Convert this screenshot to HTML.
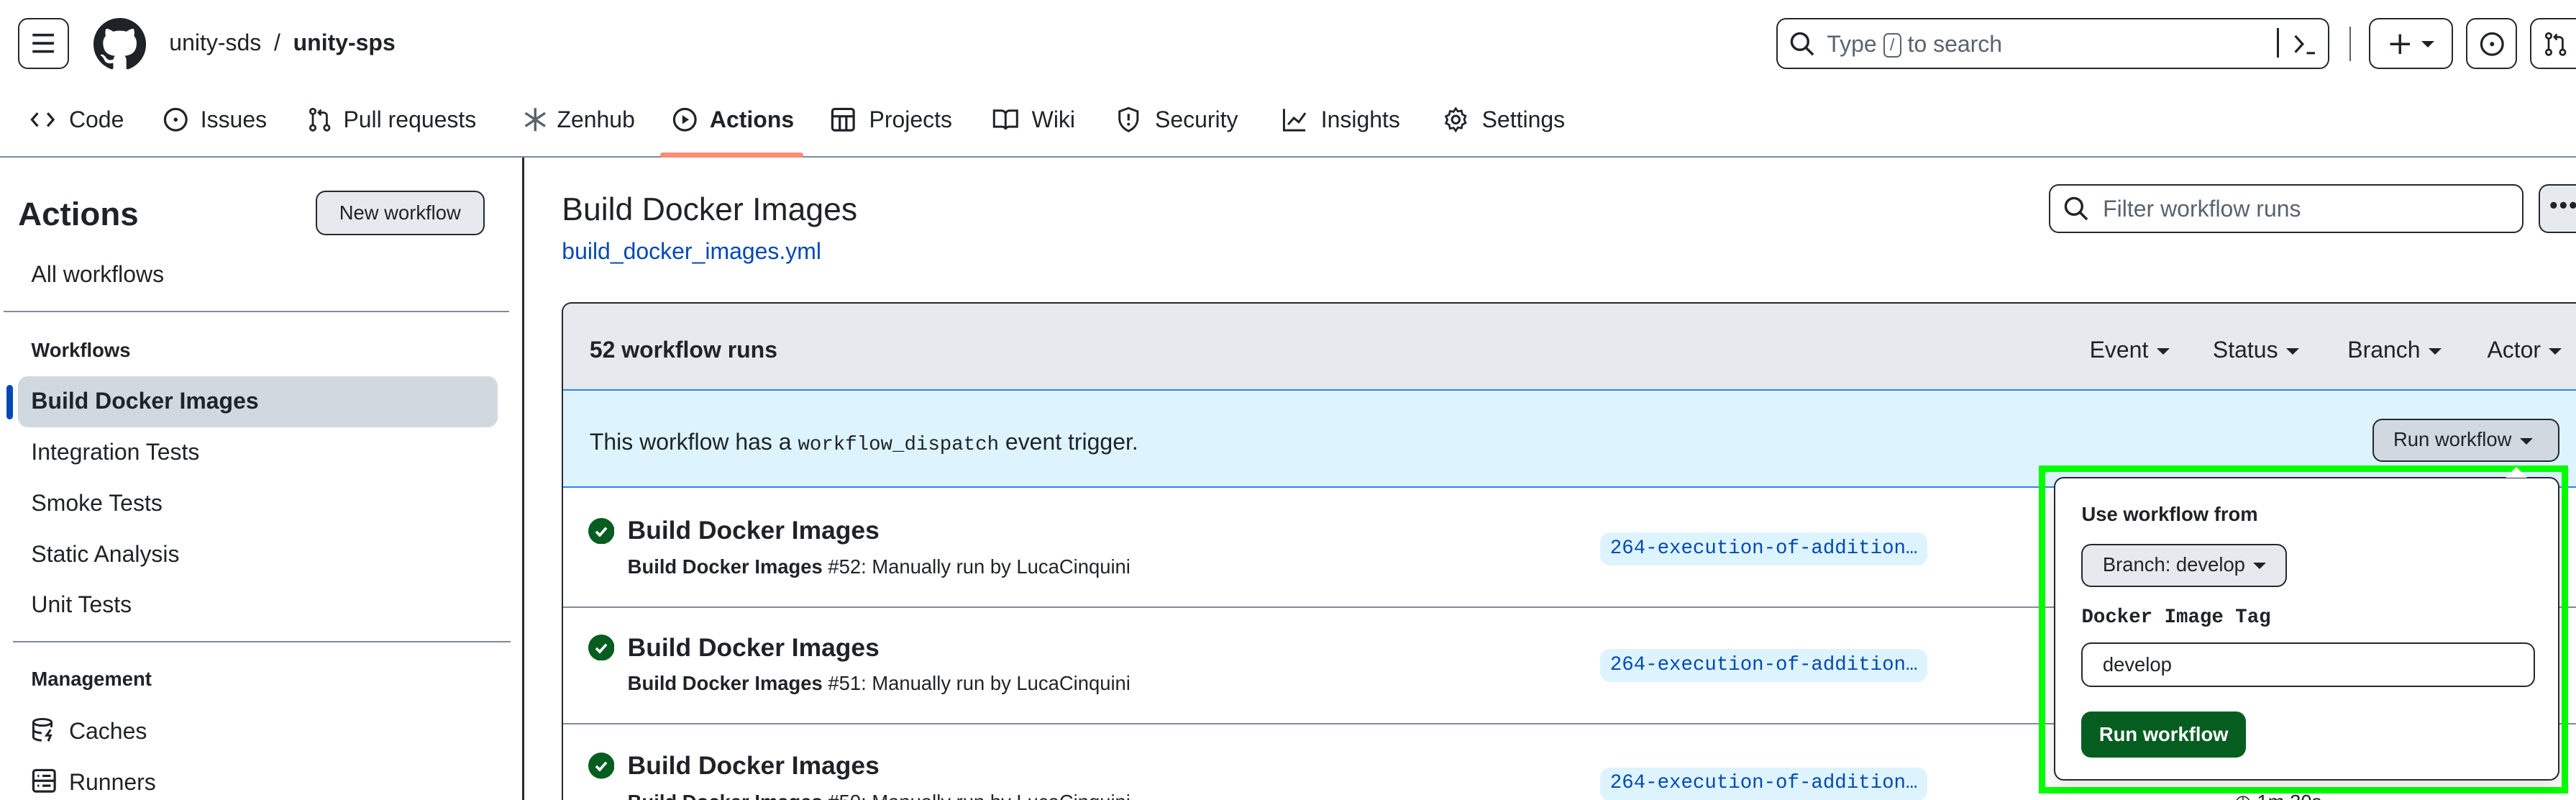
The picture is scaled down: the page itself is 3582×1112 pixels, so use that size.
<!DOCTYPE html>
<html><head><meta charset="utf-8"><style>
*{box-sizing:border-box;margin:0;padding:0}
html,body{width:3582px;height:1112px;overflow:hidden;background:#fff}
#w{zoom:2.2845;width:1568px;height:487px;position:relative;font-family:"Liberation Sans",sans-serif;color:#1f2328;font-size:14px;overflow:hidden}
.a{position:absolute;white-space:nowrap}
.btn{position:absolute;border:1px solid #25292e;border-radius:6px;background:#fff}
svg{display:block}
.ic{position:absolute}
.tri{display:inline-block;width:0;height:0;border-left:4px solid transparent;border-right:4px solid transparent;border-top:4px solid #1f2328;vertical-align:middle;margin-left:5px}
.hr{position:absolute;height:1px;background:#818b98}
.side{font-size:14px}
.pill{position:absolute;background:#ddf4ff;color:#0349b4;font-family:"Liberation Mono",monospace;font-size:12px;border-radius:6px;padding:2px 6px;height:20px;line-height:16px}
.rt{font-size:15.5px;font-weight:bold}
.rs{font-size:12px}
</style></head><body><div id="w">
<!-- header -->
<div class="btn" style="left:11px;top:11px;width:31px;height:31px"><svg width="29" height="29" viewBox="0 0 29 29"><path d="M8 9.5h13M8 14.5h13M8 19.5h13" stroke="#1f2328" stroke-width="1.6"/></svg></div>
<svg class="ic" style="left:57px;top:11px" width="32" height="32" viewBox="0 0 16 16"><path fill="#1f2328" d="M8 0C3.580 0 0 3.58 0 8c0 3.54 2.290 6.53 5.47 7.59.4.07.55-.17.55-.38 0-.19-.01-.82-.01-1.49-2.010.37-2.530-.49-2.690-.94-.09-.23-.48-.94-.82-1.130-.28-.15-.68-.52-.01-.53.63-.01 1.080.58 1.230.82.72 1.21 1.870.87 2.330.66.07-.52.28-.87.51-1.07-1.780-.2-3.640-.89-3.640-3.95 0-.87.31-1.59.82-2.15-.08-.2-.36-1.02.08-2.12 0 0 .67-.21 2.2.82.64-.18 1.320-.27 2-.27.68 0 1.360.09 2 .27 1.530-1.04 2.2-.82 2.2-.82.44 1.1.16 1.920.08 2.12.51.56.82 1.270.82 2.15 0 3.07-1.870 3.75-3.650 3.95.29.25.54.73.54 1.48 0 1.07-.01 1.93-.01 2.2 0 .21.15.46.55.38A8.013 8.013 0 0016 8c0-4.420-3.580-8-8-8z"/></svg>
<div class="a" style="left:103px;top:18px;font-size:14px">unity-sds &nbsp;/&nbsp; <b>unity-sps</b></div>
<div class="btn" style="left:1081px;top:11px;width:337px;height:31px"></div>
<svg class="ic" style="left:1089px;top:19px" width="16" height="16" viewBox="0 0 16 16"><circle cx="6.5" cy="6.5" r="5" fill="none" stroke="#1f2328" stroke-width="1.5"/><path d="M10 10l4.5 4.5" stroke="#1f2328" stroke-width="1.5"/></svg>
<div class="a" style="left:1112px;top:19px;color:#59636e;font-size:14px">Type <span style="display:inline-block;border:1px solid #59636e;border-radius:3px;font-size:10px;width:11px;height:15px;line-height:13px;text-align:center;vertical-align:1px">/</span> to search</div>
<div class="a" style="left:1386px;top:17px;width:1px;height:18px;background:#1f2328"></div>
<svg class="ic" style="left:1395px;top:19px" width="16" height="16" viewBox="0 0 16 16"><path d="M2 3l4.5 5L2 13M9 13.5h5" fill="none" stroke="#1f2328" stroke-width="1.4"/></svg>
<div class="a" style="left:1430px;top:16px;width:1px;height:21px;background:#59636e"></div>
<div class="btn" style="left:1442px;top:11px;width:51px;height:31px"><svg style="position:absolute;left:10px;top:7px" width="16" height="16" viewBox="0 0 16 16"><path d="M8 2v12M2 8h12" stroke="#1f2328" stroke-width="1.5"/></svg><span class="tri" style="position:absolute;left:31px;top:13px;margin:0"></span></div>
<div class="btn" style="left:1501px;top:11px;width:31px;height:31px"><svg style="position:absolute;left:7px;top:7px" width="16" height="16" viewBox="0 0 16 16"><circle cx="8" cy="8" r="6.5" fill="none" stroke="#1f2328" stroke-width="1.4"/><circle cx="8" cy="8" r="1.3" fill="#1f2328"/></svg></div>
<div class="btn" style="left:1540px;top:11px;width:40px;height:31px"><svg style="position:absolute;left:7px;top:7px" width="16" height="16" viewBox="0 0 16 16"><circle cx="3.5" cy="3" r="1.6" fill="none" stroke="#1f2328" stroke-width="1.2"/><circle cx="3.5" cy="13" r="1.6" fill="none" stroke="#1f2328" stroke-width="1.2"/><circle cx="12" cy="13" r="1.6" fill="none" stroke="#1f2328" stroke-width="1.2"/><path d="M3.5 4.6v6.8M12 11.4V5.5c0-1-1-1.8-2-1.8H7M8.5 2L7 3.7l1.5 1.7" fill="none" stroke="#1f2328" stroke-width="1.2"/></svg></div>
<!-- nav -->
<div class="a" style="left:0;top:95px;width:1568px;height:1px;background:#818b98"></div>
<div class="a" style="left:402px;top:93px;width:87px;height:3px;background:#fd8c73;border-radius:2px"></div>
<svg class="ic" style="left:18px;top:65px" width="16" height="16" viewBox="0 0 16 16"><path d="M5 4L1.5 8 5 12M11 4l3.5 4-3.5 4" fill="none" stroke="#1f2328" stroke-width="1.4"/></svg>
<div class="a" style="left:42px;top:65px">Code</div>
<svg class="ic" style="left:99px;top:65px" width="16" height="16" viewBox="0 0 16 16"><circle cx="8" cy="8" r="6.5" fill="none" stroke="#1f2328" stroke-width="1.4"/><circle cx="8" cy="8" r="1.2" fill="#1f2328"/></svg>
<div class="a" style="left:122px;top:65px">Issues</div>
<svg class="ic" style="left:187px;top:65px" width="16" height="16" viewBox="0 0 16 16"><circle cx="3.5" cy="3" r="1.6" fill="none" stroke="#1f2328" stroke-width="1.2"/><circle cx="3.5" cy="13" r="1.6" fill="none" stroke="#1f2328" stroke-width="1.2"/><circle cx="12" cy="13" r="1.6" fill="none" stroke="#1f2328" stroke-width="1.2"/><path d="M3.5 4.6v6.8M12 11.4V5.5c0-1-1-1.8-2-1.8H7M8.5 2L7 3.7l1.5 1.7" fill="none" stroke="#1f2328" stroke-width="1.2"/></svg>
<div class="a" style="left:209px;top:65px">Pull requests</div>
<svg class="ic" style="left:318px;top:65px" width="16" height="16" viewBox="0 0 16 16"><path d="M8 1v14M2 4l12 8M2 12l12-8" stroke="#59636e" stroke-width="1.5"/></svg>
<div class="a" style="left:339px;top:65px">Zenhub</div>
<svg class="ic" style="left:409px;top:65px" width="16" height="16" viewBox="0 0 16 16"><circle cx="8" cy="8" r="6.5" fill="none" stroke="#1f2328" stroke-width="1.4"/><path d="M6.5 5.3v5.4L10.5 8z" fill="#1f2328"/></svg>
<div class="a" style="left:432px;top:65px;font-weight:bold">Actions</div>
<svg class="ic" style="left:505px;top:65px" width="16" height="16" viewBox="0 0 16 16"><rect x="1.5" y="1.5" width="13" height="13" rx="1.5" fill="none" stroke="#1f2328" stroke-width="1.4"/><path d="M1.5 6h13M6 6v8.5M10 6v8.5" stroke="#1f2328" stroke-width="1.4"/></svg>
<div class="a" style="left:529px;top:65px">Projects</div>
<svg class="ic" style="left:604px;top:65px" width="16" height="16" viewBox="0 0 16 16"><path d="M1 2.5h4.5c1.4 0 2.5 1 2.5 2.3V14c0-1-1-1.7-2.2-1.7H1zM15 2.5h-4.5C9.1 2.5 8 3.5 8 4.8V14c0-1 1-1.7 2.2-1.7H15z" fill="none" stroke="#1f2328" stroke-width="1.3"/></svg>
<div class="a" style="left:628px;top:65px">Wiki</div>
<svg class="ic" style="left:679px;top:65px" width="16" height="16" viewBox="0 0 16 16"><path d="M8 1L2.5 3v4.5c0 3.5 2.5 6 5.5 7.5 3-1.5 5.5-4 5.5-7.5V3z" fill="none" stroke="#1f2328" stroke-width="1.3"/><path d="M8 4.5v4" stroke="#1f2328" stroke-width="1.4"/><circle cx="8" cy="10.8" r=".9" fill="#1f2328"/></svg>
<div class="a" style="left:703px;top:65px">Security</div>
<svg class="ic" style="left:780px;top:65px" width="16" height="16" viewBox="0 0 16 16"><path d="M1.5 1.5v13h13M4 11l3.5-4 3 2.5L14.5 4" fill="none" stroke="#1f2328" stroke-width="1.3"/></svg>
<div class="a" style="left:804px;top:65px">Insights</div>
<svg class="ic" style="left:878px;top:65px" width="16" height="16" viewBox="0 0 16 16"><circle cx="8" cy="8" r="2.3" fill="none" stroke="#1f2328" stroke-width="1.3"/><path d="M8 1.2l1.3 1.8 2.2-.4.5 2.2 2 1-.9 2.1.9 2.1-2 1-.5 2.2-2.2-.4L8 14.8l-1.3-1.8-2.2.4-.5-2.2-2-1 .9-2.1-.9-2.1 2-1 .5-2.2 2.2.4z" fill="none" stroke="#1f2328" stroke-width="1.2"/></svg>
<div class="a" style="left:902px;top:65px">Settings</div>
<!-- sidebar -->
<div class="a" style="left:318px;top:96px;width:1px;height:400px;background:#25292e"></div>
<div class="a" style="left:11px;top:119px;font-size:20px;font-weight:bold">Actions</div>
<div class="btn" style="left:192px;top:116px;width:103px;height:27px;background:#e6eaef;font-size:12px;line-height:25px;text-align:center">New workflow</div>
<div class="a side" style="left:19px;top:159px">All workflows</div>
<div class="hr" style="left:2px;top:189px;width:308px"></div>
<div class="a" style="left:19px;top:206px;font-size:12px;font-weight:bold">Workflows</div>
<div class="a" style="left:11px;top:229px;width:292px;height:31px;background:#d1d9e0;border-radius:6px"></div>
<div class="a" style="left:4px;top:234px;width:4px;height:21px;background:#0349b4;border-radius:2px"></div>
<div class="a side" style="left:19px;top:236px;font-weight:bold">Build Docker Images</div>
<div class="a side" style="left:19px;top:267px">Integration Tests</div>
<div class="a side" style="left:19px;top:298px">Smoke Tests</div>
<div class="a side" style="left:19px;top:329px">Static Analysis</div>
<div class="a side" style="left:19px;top:360px">Unit Tests</div>
<div class="hr" style="left:8px;top:390px;width:303px"></div>
<div class="a" style="left:19px;top:406px;font-size:12px;font-weight:bold">Management</div>
<svg class="ic" style="left:19px;top:436px" width="16" height="16" viewBox="0 0 16 16"><ellipse cx="7" cy="3.5" rx="5.5" ry="2" fill="none" stroke="#1f2328" stroke-width="1.3"/><path d="M1.5 3.5v9c0 1.1 2.5 2 5 2M12.5 3.5v3M1.5 8c0 1.1 2.5 2 5 2" fill="none" stroke="#1f2328" stroke-width="1.3"/><path d="M12 8l-2.5 3.5h2.5L10.5 15" fill="none" stroke="#1f2328" stroke-width="1.3"/></svg>
<div class="a side" style="left:42px;top:437px">Caches</div>
<svg class="ic" style="left:19px;top:467px" width="16" height="16" viewBox="0 0 16 16"><rect x="1.5" y="1.5" width="13" height="13" rx="1.5" fill="none" stroke="#1f2328" stroke-width="1.4"/><path d="M1.5 8h13M4 5h1M7 5h5M4 11h1M7 11h5" stroke="#1f2328" stroke-width="1.4"/></svg>
<div class="a side" style="left:42px;top:468px">Runners</div>
<!-- main -->
<div class="a" style="left:342px;top:117px;font-size:19.5px">Build Docker Images</div>
<div class="a" style="left:342px;top:145px;color:#0349b4;font-size:14px">build_docker_images.yml</div>
<div class="btn" style="left:1247px;top:112px;width:289px;height:30px"></div>
<svg class="ic" style="left:1256px;top:119px" width="16" height="16" viewBox="0 0 16 16"><circle cx="6.5" cy="6.5" r="5" fill="none" stroke="#1f2328" stroke-width="1.5"/><path d="M10 10l4.5 4.5" stroke="#1f2328" stroke-width="1.5"/></svg>
<div class="a" style="left:1280px;top:119px;color:#59636e">Filter workflow runs</div>
<div class="btn" style="left:1545px;top:112px;width:40px;height:30px;background:#e6eaef"><span style="position:absolute;left:6px;top:4px;font-size:14px;font-weight:bold;letter-spacing:1px">•••</span></div>
<div class="a" style="left:342px;top:184px;width:1240px;height:320px;border:1px solid #25292e;border-radius:6px;overflow:hidden">
 <div style="position:absolute;left:0;top:0;width:100%;height:53px;background:#e6eaef"></div>
 <div class="a" style="left:16px;top:20px;font-weight:bold">52 workflow runs</div>
 <div class="a" style="left:929px;top:20px">Event<span class="tri"></span></div>
 <div class="a" style="left:1004px;top:20px">Status<span class="tri"></span></div>
 <div class="a" style="left:1086px;top:20px">Branch<span class="tri"></span></div>
 <div class="a" style="left:1171px;top:20px">Actor<span class="tri"></span></div>
 <div style="position:absolute;left:0;top:52px;width:100%;height:60px;background:#ddf4ff;border-top:1px solid #2f81f7;border-bottom:1px solid #2f81f7"></div>
 <div class="a" style="left:16px;top:76px">This workflow has a <span style="font-family:'Liberation Mono',monospace;font-size:12px">workflow_dispatch</span> event trigger.</div>
 <div class="btn" style="left:1101px;top:70px;width:114px;height:26px;background:#d1d9e0;font-size:12px;line-height:24px;padding-left:12px">Run workflow<span class="tri"></span></div>
 <div class="hr" style="left:0;top:184px;width:100%"></div>
 <div class="hr" style="left:0;top:255px;width:100%"></div>
</div>
<!-- rows -->
<svg class="ic" style="left:358px;top:315px" width="16" height="16" viewBox="0 0 16 16"><circle cx="8" cy="8" r="8" fill="#055d20"/><path d="M4.8 8.3l2.2 2.2 4-4.5" fill="none" stroke="#fff" stroke-width="1.6"/></svg>
<div class="a rt" style="left:382px;top:314px">Build Docker Images</div>
<div class="a rs" style="left:382px;top:338px"><b>Build Docker Images</b> #52: Manually run by LucaCinquini</div>
<div class="pill" style="left:974px;top:324px">264-execution-of-addition…</div>
<svg class="ic" style="left:358px;top:386px" width="16" height="16" viewBox="0 0 16 16"><circle cx="8" cy="8" r="8" fill="#055d20"/><path d="M4.8 8.3l2.2 2.2 4-4.5" fill="none" stroke="#fff" stroke-width="1.6"/></svg>
<div class="a rt" style="left:382px;top:385px">Build Docker Images</div>
<div class="a rs" style="left:382px;top:409px"><b>Build Docker Images</b> #51: Manually run by LucaCinquini</div>
<div class="pill" style="left:974px;top:395px">264-execution-of-addition…</div>
<svg class="ic" style="left:358px;top:458px" width="16" height="16" viewBox="0 0 16 16"><circle cx="8" cy="8" r="8" fill="#055d20"/><path d="M4.8 8.3l2.2 2.2 4-4.5" fill="none" stroke="#fff" stroke-width="1.6"/></svg>
<div class="a rt" style="left:382px;top:457px">Build Docker Images</div>
<div class="a rs" style="left:382px;top:481px"><b>Build Docker Images</b> #50: Manually run by LucaCinquini</div>
<div class="pill" style="left:974px;top:467px">264-execution-of-addition…</div>
<div class="a rs" style="left:1360px;top:481px">◷ 1m 30s</div>
<!-- popup -->
<div class="a" style="left:1241px;top:283px;width:322px;height:200px;border:4px solid #00ff00"></div>
<div class="a" style="left:1250px;top:290px;width:308px;height:185px;background:#fff;border:1px solid #25292e;border-radius:6px;box-shadow:0 4px 10px rgba(0,0,0,.1)"></div>
<div class="a" style="left:1525px;top:284px;width:0;height:0;border-left:7px solid transparent;border-right:7px solid transparent;border-bottom:7px solid #fff"></div>
<div class="a" style="left:1267px;top:306px;font-size:12px;font-weight:bold">Use workflow from</div>
<div class="btn" style="left:1267px;top:331px;width:125px;height:26px;background:#e6eaef;font-size:12px;line-height:24px;padding-left:12px">Branch: develop<span class="tri"></span></div>
<div class="a" style="left:1267px;top:369px;font-family:'Liberation Mono',monospace;font-size:12px;font-weight:bold">Docker Image Tag</div>
<div class="btn" style="left:1267px;top:391px;width:276px;height:27px;font-size:12px;line-height:25px;padding-left:12px">develop</div>
<div class="a" style="left:1267px;top:433px;width:100px;height:28px;background:#055d20;border-radius:6px;color:#fff;font-size:12px;line-height:28px;text-align:center;font-weight:bold">Run workflow</div>
</div></body></html>
